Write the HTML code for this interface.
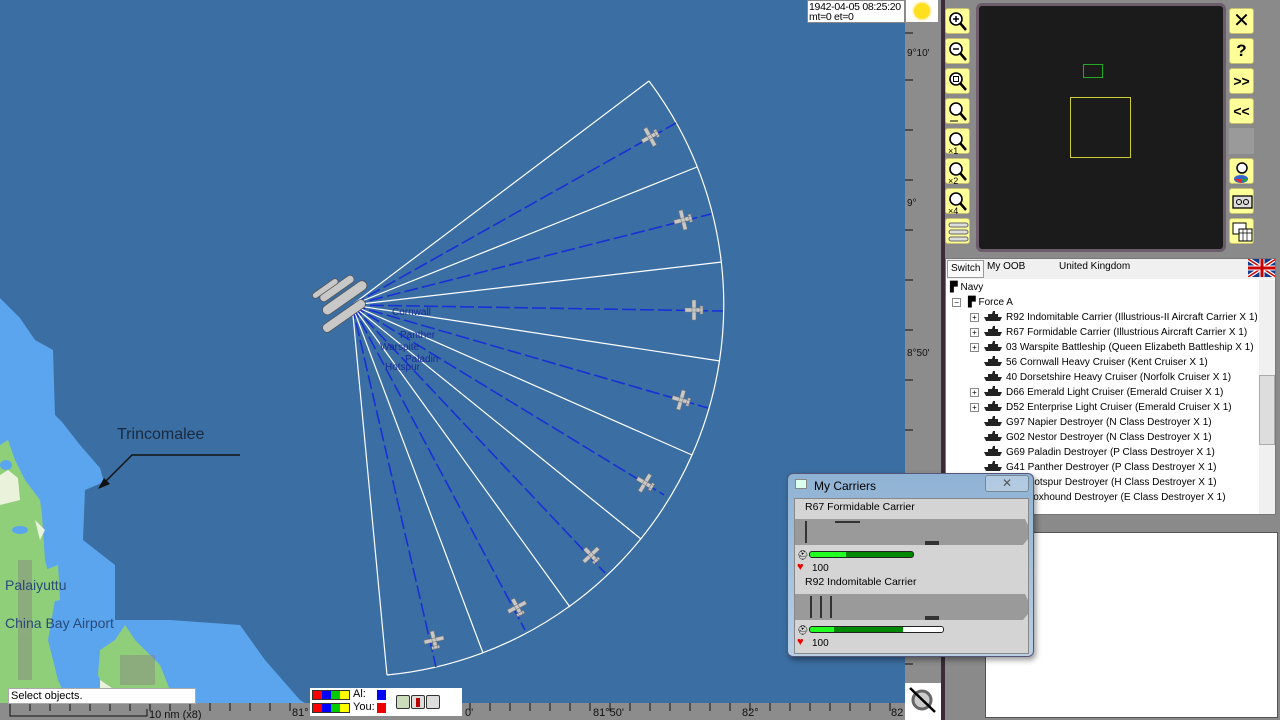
<!DOCTYPE html>
<html><head><meta charset="utf-8"><style>
*{margin:0;padding:0;box-sizing:border-box}
body{width:1280px;height:720px;overflow:hidden;position:relative;background:#7f7f7f;font-family:"Liberation Sans",sans-serif;font-size:11px;color:#000}
.abs{position:absolute}
.yb{position:absolute;width:25px;height:26px;background:#ffff99;border:1px solid #c8c070;border-radius:3px;box-shadow:1px 1px 0 #888}
.yb svg{position:absolute;left:0;top:0}
.tree div{height:15px;line-height:15px;white-space:nowrap;position:relative}
.ship{display:inline-block;width:18px;height:10px;vertical-align:-1px;margin-right:4px}
.pl{position:absolute;left:20px;top:3px;width:9px;height:9px;border:1px solid #888;background:#fff;font-size:8px;line-height:7px;text-align:center}
</style></head><body>

<svg width="0" height="0" style="position:absolute"><defs>
<symbol id="sh" viewBox="0 0 18 10"><path d="M0,6 L18,6 L16,10 L2,10Z M4,6 L4,3 L8,3 L9,0 L11,0 L11,3 L14,3 L14,6Z" fill="#222"/></symbol>
<symbol id="mg" viewBox="0 0 25 26"><circle cx="10" cy="10" r="6" fill="#fff" stroke="#000" stroke-width="1.6"/><line x1="14" y1="14" x2="20" y2="21" stroke="#000" stroke-width="2.5"/></symbol>
</defs></svg>

<svg class="abs" style="left:0;top:0" width="945" height="720">
<rect x="0" y="0" width="905" height="703" fill="#3b6ea2"/>
<polygon fill="#5aa5ee" points="0,298 20,318 35,340 53,350 55,415 62,422 80,445 100,468 104,482 85,490 83,540 115,565 115,620 170,620 240,625 265,660 300,700 305,703 0,703"/>
<g fill="#8fcf7a">
<polygon points="0,445 8,440 15,460 25,480 40,500 42,515 45,560 55,600 48,640 58,680 68,703 0,703"/>
<polygon points="100,650 115,640 125,625 135,640 150,655 160,665 170,690 150,700 110,703 98,675"/>
<polygon points="45,570 58,565 60,600 50,602"/>
</g>
<g fill="#eaf2dc"><polygon points="8,470 18,478 20,500 0,505 0,475"/><polygon points="35,520 45,530 40,540"/><polygon points="100,680 115,690 100,700"/></g>
<g fill="#5aa5ee"><ellipse cx="6" cy="465" rx="6" ry="5"/><ellipse cx="20" cy="530" rx="8" ry="4"/></g>
<g fill="#8a8080" opacity=".45"><rect x="18" y="560" width="14" height="120"/><rect x="120" y="655" width="35" height="30"/></g>
<text x="117" y="439" font-family="Liberation Sans" font-size="16" fill="#1a2a40">Trincomalee</text>
<polyline points="240,455 132,455 100,487" fill="none" stroke="#111" stroke-width="1.5"/>
<polygon points="98,489 104,478 110,484" fill="#111"/>
<text x="5" y="590" font-size="14" fill="#2a4a7a">Palaiyuttu</text>
<text x="5" y="628" font-size="14" fill="#2a4a7a">China Bay Airport</text>
<g stroke="#fff" stroke-width="1.2" fill="none">
<path d="M649,81 A372,372 0 0 1 387,675"/>
<line x1="352" y1="305" x2="649" y2="81"/><line x1="352" y1="305" x2="697" y2="167"/>
<line x1="352" y1="305" x2="722" y2="262"/><line x1="352" y1="305" x2="720" y2="361"/>
<line x1="352" y1="305" x2="692" y2="455"/><line x1="352" y1="305" x2="641" y2="539"/>
<line x1="352" y1="305" x2="570" y2="607"/><line x1="352" y1="305" x2="483" y2="653"/>
<line x1="352" y1="305" x2="387" y2="675"/>
</g>
<g stroke="#1830d8" stroke-width="1.6" stroke-dasharray="14 4">
<line x1="352" y1="305" x2="676" y2="123"/><line x1="352" y1="305" x2="711" y2="214"/>
<line x1="352" y1="305" x2="723" y2="311"/><line x1="352" y1="305" x2="708" y2="408"/>
<line x1="352" y1="305" x2="664" y2="495"/><line x1="352" y1="305" x2="605" y2="573"/>
<line x1="352" y1="305" x2="525" y2="630"/><line x1="352" y1="305" x2="436" y2="667"/>
</g>
<g fill="#c8c8c8" stroke="#777" stroke-width=".6">
<g transform="translate(650,137) rotate(-29)"><path d="M-9,-2h18v4h-18z M-2,-10h4v20h-4z M6,-4h3v8h-3z"/></g>
<g transform="translate(683,220) rotate(-14)"><path d="M-9,-2h18v4h-18z M-2,-10h4v20h-4z M6,-4h3v8h-3z"/></g>
<g transform="translate(694,310)"><path d="M-9,-2h18v4h-18z M-2,-10h4v20h-4z M6,-4h3v8h-3z"/></g>
<g transform="translate(681,400) rotate(16)"><path d="M-9,-2h18v4h-18z M-2,-10h4v20h-4z M6,-4h3v8h-3z"/></g>
<g transform="translate(645,483) rotate(31)"><path d="M-9,-2h18v4h-18z M-2,-10h4v20h-4z M6,-4h3v8h-3z"/></g>
<g transform="translate(591,555) rotate(47)"><path d="M-9,-2h18v4h-18z M-2,-10h4v20h-4z M6,-4h3v8h-3z"/></g>
<g transform="translate(517,607) rotate(62)"><path d="M-9,-2h18v4h-18z M-2,-10h4v20h-4z M6,-4h3v8h-3z"/></g>
<g transform="translate(434,640) rotate(77)"><path d="M-9,-2h18v4h-18z M-2,-10h4v20h-4z M6,-4h3v8h-3z"/></g>
</g>
<g fill="#c8c8c8" stroke="#555" stroke-width=".8">
<g transform="rotate(-35 345 300)"><rect x="320" y="293" width="52" height="10" rx="5"/><rect x="310" y="308" width="50" height="9" rx="4"/><rect x="325" y="282" width="40" height="8" rx="4"/></g>
<g transform="rotate(-35 330 290)"><rect x="312" y="283" width="30" height="6" rx="3"/></g>
</g>
<g font-size="10" fill="#1a2a9a"><text x="392" y="315">Cornwall</text><text x="400" y="338">Panther</text><text x="380" y="350">Warspite</text><text x="405" y="362">Paladin</text><text x="385" y="370">Hotspur</text></g>
<rect x="905" y="0" width="37" height="703" fill="#8c8c8c"/>
<g stroke="#111" stroke-width="1">
<path d="M905,33h8M905,80h8M905,130h8M905,180h8M905,230h8M905,280h8M905,330h8M905,380h8M905,430h8M905,480h8M905,530h8M905,580h8M905,630h8M905,664h8"/>
</g>
<g font-size="10" fill="#111"><text x="907" y="56">9°10'</text><text x="907" y="206">9°</text><text x="907" y="356">8°50'</text></g>
<rect x="0" y="703" width="905" height="17" fill="#8c8c8c"/>
<g stroke="#111"><path d="M10,703v8M30,703v8M50,703v8M70,703v8M90,703v8M110,703v8M130,703v8M150,703v8M170,703v8M190,703v8M210,703v8M230,703v8M250,703v8M270,703v8M290,703v8M470,703v8M490,703v8M510,703v8M530,703v8M550,703v8M570,703v8M590,703v8M610,703v8M630,703v8M650,703v8M670,703v8M690,703v8M710,703v8M730,703v8M750,703v8M770,703v8M790,703v8M810,703v8M830,703v8M850,703v8M870,703v8M890,703v8"/></g>
<path d="M10,709v7h137v-7" stroke="#111" fill="none"/>
<g font-size="11" fill="#111"><text x="149" y="718">10 nm (x8)</text><text x="292" y="716">81°</text><text x="465" y="716">0'</text><text x="593" y="716">81°50'</text><text x="742" y="716">82°</text><text x="891" y="716">82</text></g>
<rect x="905" y="683" width="36" height="37" fill="#fff"/>
<circle cx="922" cy="700" r="9" fill="#ccc" stroke="#666" stroke-width="3"/>
<line x1="910" y1="688" x2="935" y2="712" stroke="#000" stroke-width="2.5"/>
</svg>

<div class="abs" style="left:807px;top:0;width:98px;height:23px;background:#fff;border:1px solid #888;font-size:10.5px;line-height:10px;padding:1px 1px;white-space:nowrap;letter-spacing:-.3px">1942-04-05 08:25:20<br>mt=0 et=0</div>
<div class="abs" style="left:906px;top:0;width:32px;height:22px;background:#fff"><div style="position:absolute;left:8px;top:3px;width:16px;height:16px;border-radius:50%;background:#ffe020;box-shadow:0 0 3px #fc0"></div></div>

<div class="abs" style="left:8px;top:688px;width:188px;height:16px;background:#fff;border:1px solid #aaa;font-size:11px;line-height:14px;padding-left:2px">Select objects.</div>
<div class="abs" style="left:310px;top:688px;width:152px;height:28px;background:#fff">
<div class="abs" style="left:2px;top:2px;width:38px;height:10px;border:1px solid #333;background:linear-gradient(90deg,#f00 25%,#00f 25% 50%,#0c0 50% 75%,#ff0 75%)"></div>
<div class="abs" style="left:2px;top:15px;width:38px;height:10px;border:1px solid #333;background:linear-gradient(90deg,#f00 25%,#00f 25% 50%,#0c0 50% 75%,#ff0 75%)"></div>
<div class="abs" style="left:43px;top:0;font-size:11px;line-height:13px">Al:<br>You:</div>
<div class="abs" style="left:67px;top:2px;width:9px;height:10px;background:#00f"></div>
<div class="abs" style="left:67px;top:15px;width:9px;height:10px;background:#e00"></div>
<div class="abs" style="left:86px;top:7px;width:14px;height:14px;border:1px solid #333;background:#cdb;border-radius:2px"></div>
<div class="abs" style="left:101px;top:7px;width:14px;height:14px;border:1px solid #333;background:#ddd;border-radius:2px"><div style="margin:2px auto;width:4px;height:9px;background:#b00"></div></div>
<div class="abs" style="left:116px;top:7px;width:14px;height:14px;border:1px solid #333;background:#ddd;border-radius:2px"></div>
</div>

<div class="abs" style="left:941px;top:0;width:4px;height:720px;background:#3a2a3a"></div>
<div class="abs" style="left:945px;top:0;width:335px;height:720px;background:#8a8a8a"></div>
<div class="abs" style="left:976px;top:3px;width:250px;height:249px;background:#1b1b1b;border:3px solid #6c5c6c;border-radius:6px"></div>
<div class="abs" style="left:1083px;top:64px;width:20px;height:14px;border:1px solid #2a2"></div>
<div class="abs" style="left:1070px;top:97px;width:61px;height:61px;border:1px solid #cc3"></div>
<div class="yb" style="left:945px;top:8px"><svg width="25" height="26"><use href="#mg"/><path d="M7,10h6M10,7v6" stroke="#000" stroke-width="1.5"/></svg></div>
<div class="yb" style="left:945px;top:38px"><svg width="25" height="26"><use href="#mg"/><path d="M7,10h6" stroke="#000" stroke-width="1.5"/></svg></div>
<div class="yb" style="left:945px;top:68px"><svg width="25" height="26"><use href="#mg"/><rect x="7.5" y="7.5" width="5" height="5" fill="none" stroke="#000"/></svg></div>
<div class="yb" style="left:945px;top:98px"><svg width="25" height="26"><use href="#mg"/><path d="M4,22h8" stroke="#000"/></svg></div>
<div class="yb" style="left:945px;top:128px"><svg width="25" height="26"><use href="#mg"/><text x="2" y="25" font-size="9">×1</text></svg></div>
<div class="yb" style="left:945px;top:158px"><svg width="25" height="26"><use href="#mg"/><text x="2" y="25" font-size="9">×2</text></svg></div>
<div class="yb" style="left:945px;top:188px"><svg width="25" height="26"><use href="#mg"/><text x="2" y="25" font-size="9">×4</text></svg></div>
<div class="yb" style="left:945px;top:218px"><svg width="25" height="26"><g fill="#ddd" stroke="#666"><rect x="3" y="4" width="19" height="4" rx="2"/><rect x="3" y="11" width="19" height="4" rx="2"/><rect x="3" y="18" width="19" height="4" rx="2"/></g></svg></div>
<div class="yb" style="left:1229px;top:8px;font-size:20px;text-align:center;line-height:24px">✕</div>
<div class="yb" style="left:1229px;top:38px;font-size:17px;font-weight:bold;text-align:center;line-height:24px">?</div>
<div class="yb" style="left:1229px;top:68px;font-size:14px;font-weight:bold;text-align:center;line-height:24px">&gt;&gt;</div>
<div class="yb" style="left:1229px;top:98px;font-size:14px;font-weight:bold;text-align:center;line-height:24px">&lt;&lt;</div>
<div class="abs" style="left:1229px;top:128px;width:25px;height:26px;background:#9a9a9a"></div>
<div class="yb" style="left:1229px;top:158px"><svg width="25" height="26"><circle cx="12" cy="9" r="5" fill="#fff" stroke="#000" stroke-width="1.5"/><ellipse cx="11" cy="20" rx="7" ry="4" fill="#36c"/><path d="M4,20h7v4z" fill="#e22"/><path d="M11,20h7l-3,3z" fill="#2a2"/></svg></div>
<div class="yb" style="left:1229px;top:188px"><svg width="25" height="26"><rect x="3" y="7" width="19" height="12" fill="#ddd" stroke="#000" stroke-width="1.3"/><circle cx="9" cy="13" r="2.5" fill="none" stroke="#000"/><circle cx="16" cy="13" r="2.5" fill="none" stroke="#000"/></svg></div>
<div class="yb" style="left:1229px;top:218px"><svg width="25" height="26"><rect x="3" y="4" width="13" height="11" fill="#fff" stroke="#000"/><rect x="9" y="10" width="13" height="12" fill="#fff" stroke="#000"/><path d="M9,14h13M13,10v12M17,10v12" stroke="#000" stroke-width=".7"/></svg></div>

<div class="abs" style="left:945px;top:258px;width:331px;height:257px;background:#fff;border:1px solid #777;overflow:hidden">
<div style="height:20px;background:#f0f0f0;position:relative;font-size:10px">
<div class="abs" style="left:1px;top:1px;width:37px;height:18px;border:1px solid #999;background:#fafafa;line-height:16px;padding-left:3px">Switch</div>
<div class="abs" style="left:41px;top:2px">My OOB</div><div class="abs" style="left:113px;top:2px">United Kingdom</div>
<div class="abs" style="left:302px;top:0;width:28px;height:18px;background:#123a8c"><svg width="28" height="18"><path d="M0,0L28,18M28,0L0,18" stroke="#fff" stroke-width="4"/><path d="M0,0L28,18M28,0L0,18" stroke="#c00" stroke-width="1.5"/><path d="M14,0V18M0,9H28" stroke="#fff" stroke-width="5"/><path d="M14,0V18M0,9H28" stroke="#c00" stroke-width="3"/></svg></div>
</div>
<div class="tree" style="position:absolute;left:4px;top:21px;font-size:10px">
<div>▛ Navy</div>
<div style="padding-left:18px"><span class="pl" style="left:2px">−</span>▛ Force A</div>
<div style="padding-left:34px"><span class="pl">+</span><svg class="ship"><use href="#sh"/></svg>R92 Indomitable Carrier (Illustrious-II Aircraft Carrier X 1)</div>
<div style="padding-left:34px"><span class="pl">+</span><svg class="ship"><use href="#sh"/></svg>R67 Formidable Carrier (Illustrious Aircraft Carrier X 1)</div>
<div style="padding-left:34px"><span class="pl">+</span><svg class="ship"><use href="#sh"/></svg>03 Warspite Battleship (Queen Elizabeth Battleship X 1)</div>
<div style="padding-left:34px"><svg class="ship"><use href="#sh"/></svg>56 Cornwall Heavy Cruiser (Kent Cruiser X 1)</div>
<div style="padding-left:34px"><svg class="ship"><use href="#sh"/></svg>40 Dorsetshire Heavy Cruiser (Norfolk Cruiser X 1)</div>
<div style="padding-left:34px"><span class="pl">+</span><svg class="ship"><use href="#sh"/></svg>D66 Emerald Light Cruiser (Emerald Cruiser X 1)</div>
<div style="padding-left:34px"><span class="pl">+</span><svg class="ship"><use href="#sh"/></svg>D52 Enterprise Light Cruiser (Emerald Cruiser X 1)</div>
<div style="padding-left:34px"><svg class="ship"><use href="#sh"/></svg>G97 Napier Destroyer (N Class Destroyer X 1)</div>
<div style="padding-left:34px"><svg class="ship"><use href="#sh"/></svg>G02 Nestor Destroyer (N Class Destroyer X 1)</div>
<div style="padding-left:34px"><svg class="ship"><use href="#sh"/></svg>G69 Paladin Destroyer (P Class Destroyer X 1)</div>
<div style="padding-left:34px"><svg class="ship"><use href="#sh"/></svg>G41 Panther Destroyer (P Class Destroyer X 1)</div>
<div style="padding-left:34px"><svg class="ship"><use href="#sh"/></svg>H01 Hotspur Destroyer (H Class Destroyer X 1)</div>
<div style="padding-left:34px"><svg class="ship"><use href="#sh"/></svg>H37 Foxhound Destroyer (E Class Destroyer X 1)</div>
</div>
<div class="abs" style="left:313px;top:21px;width:16px;height:234px;background:#f0f0f0"><div style="margin-top:95px;height:70px;background:#ddd;border:1px solid #aaa"></div></div>
</div>
<div class="abs" style="left:985px;top:532px;width:293px;height:186px;background:#fff;border:1px solid #555"></div>

<div class="abs" style="left:787px;top:473px;width:247px;height:184px;background:linear-gradient(#8fb2d4,#b9cfe4);border:1px solid #557;border-radius:6px;box-shadow:2px 3px 6px rgba(0,0,0,.4)">
<div class="abs" style="left:7px;top:5px;width:12px;height:10px;background:#dfe;border:1px solid #888"></div>
<div class="abs" style="left:26px;top:5px;font-size:12px">My Carriers</div>
<div class="abs" style="left:197px;top:1px;width:44px;height:17px;border:1px solid #789;border-radius:3px;background:rgba(255,255,255,.3);text-align:center;font-size:12px;color:#555">✕</div>
<div class="abs" style="left:6px;top:24px;width:235px;height:156px;background:#d4d4d4;border:1px solid #888">
<div class="abs" style="left:10px;top:2px;font-size:10.5px">R67 Formidable Carrier</div>
<svg class="abs" style="left:0;top:16px" width="235" height="34"><path d="M0,4 L230,4 L233,10 L233,24 L228,30 L0,30Z" fill="#9a9a9a"/><g fill="#333"><rect x="10" y="6" width="2" height="22"/><rect x="130" y="26" width="14" height="4"/><rect x="40" y="6" width="25" height="2"/></g></svg>
<div class="abs" style="left:2px;top:51px;font-size:9px">⛑</div>
<div class="abs" style="left:14px;top:52px;width:105px;height:7px;border:1px solid #222;border-radius:3px;background:linear-gradient(90deg,#2f2 0 35%,#080 35%)"></div>
<div class="abs" style="left:2px;top:62px;color:#e00;font-size:11px">♥</div><div class="abs" style="left:17px;top:64px;font-size:10px">100</div>
<div class="abs" style="left:10px;top:77px;font-size:10.5px">R92 Indomitable Carrier</div>
<svg class="abs" style="left:0;top:91px" width="235" height="34"><path d="M0,4 L230,4 L233,10 L233,24 L228,30 L0,30Z" fill="#9a9a9a"/><g fill="#333"><rect x="15" y="6" width="2" height="22"/><rect x="25" y="6" width="2" height="22"/><rect x="35" y="6" width="2" height="22"/><rect x="130" y="26" width="14" height="4"/></g></svg>
<div class="abs" style="left:2px;top:126px;font-size:9px">⛑</div>
<div class="abs" style="left:14px;top:127px;width:135px;height:7px;border:1px solid #222;border-radius:3px;background:linear-gradient(90deg,#2f2 0 18%,#080 18% 70%,#fff 70%)"></div>
<div class="abs" style="left:2px;top:137px;color:#e00;font-size:11px">♥</div><div class="abs" style="left:17px;top:139px;font-size:10px">100</div>
</div></div>
</body></html>
